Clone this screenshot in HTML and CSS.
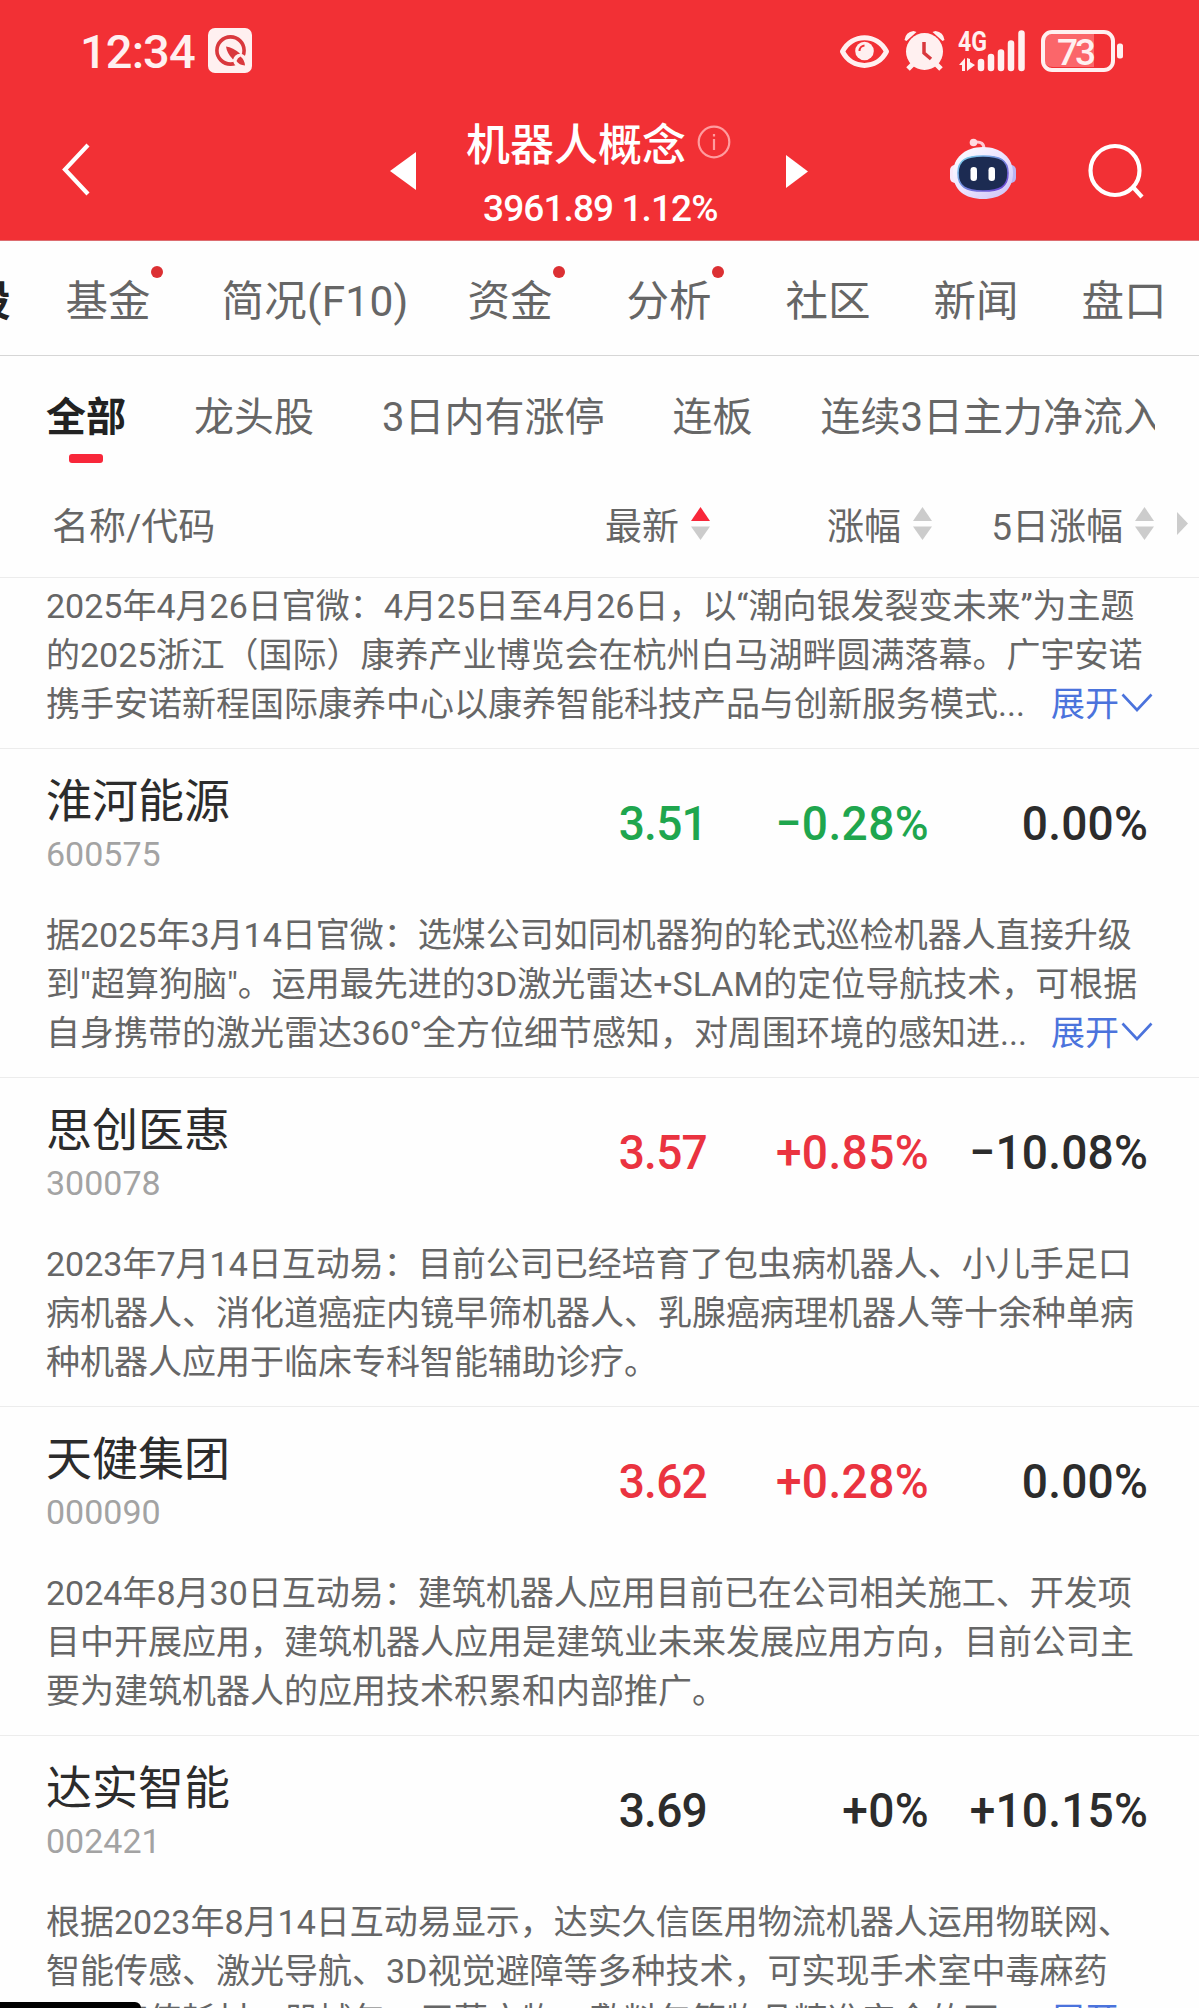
FILE: index.html
```html
<!DOCTYPE html>
<html lang="zh-CN">
<head>
<meta charset="utf-8">
<title>机器人概念</title>
<link rel="stylesheet" href="styles.css">
</head>
<body>
<div class="screen">
  <header class="top">
    <div class="status">
      <span class="clock">12:34</span>
      <svg class="app-icon" width="44" height="45" viewBox="0 0 44 45">
        <rect width="44" height="45" rx="7" fill="#fff0f0"/>
        <circle cx="22.5" cy="22.5" r="13.6" fill="none" stroke="#d9383d" stroke-width="3.6"/>
        <path d="M18 18.500q7 1 14 7l-7 6q-6-6-7-13z" fill="#d9383d"/>
        <circle cx="32" cy="32.500" r="6.800" fill="#fff0f0"/>
        <path d="M36 36l6-5v10l-6 2z" fill="#fff0f0"/>
        <path d="M32.500 28.500q4 3 4.500 9-6-.5-8.500-4.500 1-3.500 4-4.500z" fill="#d9383d"/>
      </svg>
      <span class="spacer"></span>
      <svg class="sys" width="290" height="50" viewBox="835 25 290 50">
        <path d="M842.500 51.500C852 33 877 33 886.500 51.500C877 70 852 70 842.500 51.500Z" fill="none" stroke="#fff0f0" stroke-width="5" stroke-linejoin="round"/>
        <circle cx="864.500" cy="51" r="9.300" fill="#fff0f0"/>
        <path d="M859.500 51a5.500 5.500 0 0 1 5-5.500" fill="none" stroke="#f23035" stroke-width="2"/>
        <circle cx="924.500" cy="51.500" r="18.500" fill="#fff0f0"/>
        <path d="M904.500 40q1-8 9-9l3 1-10 9zM944.500 40q-1-8-9-9l-3 1 10 9z" fill="#fff0f0"/>
        <path d="M913 64l-5 5M936 64l5 5" stroke="#fff0f0" stroke-width="5"/>
        <path d="M924 42v11l7 6" fill="none" stroke="#d9383d" stroke-width="3.500"/>
        <text class="net" x="958" y="50.500" textLength="29" lengthAdjust="spacingAndGlyphs">4G</text>
        <path d="M959 65l6-7v13h-3v-6zM967 58v13l8-6-5-3v-3z" fill="#fff0f0"/>
        <path d="M981 62v6M991 57v11M1001 52.500v15.500M1011 43.500v24.500M1021.500 33.500v34.500" stroke="#fff0f0" stroke-width="6.500" stroke-linecap="round"/>
        <path d="M1053 34h41v33h-41q-9 0-9-9v-15q0-9 9-9z" fill="#fb666a"/>
        <rect x="1043" y="32" width="70" height="38" rx="9" fill="none" stroke="#fff0f0" stroke-width="4"/>
        <rect x="1117" y="43.500" width="6" height="15" rx="2.500" fill="#fff0f0"/>
        <text class="battery" x="1057" y="65" textLength="39">73</text>
      </svg>
    </div>
    <div class="nav">
      <svg class="back" width="30" height="54" viewBox="0 0 30 54"><path d="M27 2L4 26.500 27 51" fill="none" stroke="#fff" stroke-width="4.200"/></svg>
      <svg class="prev" width="26" height="38" viewBox="0 0 26 38"><path d="M26 0v38L0 19z" fill="#fff"/></svg>
      <div class="heading">
        <div class="title"><span>机器人概念</span><svg class="info" width="34" height="34" viewBox="0 0 34 34" fill="none" stroke="#ff9c9f" stroke-width="2.200"><circle cx="17" cy="17" r="15.300"/><path d="M17 14v11M17 9v2.500"/></svg></div>
        <div class="quote">3961.89 1.12%</div>
      </div>
      <svg class="next" width="22" height="33" viewBox="0 0 22 33"><path d="M0 0v33l22-16.500z" fill="#fff"/></svg>
      <svg class="robot" width="68" height="62" viewBox="949 138 68 62">
        <defs>
          <linearGradient id="shell" x1="0" y1="0" x2="1" y2="1"><stop offset="0" stop-color="#fff"/><stop offset=".5" stop-color="#ece4ff"/><stop offset="1" stop-color="#c9c0f5"/></linearGradient>
          <linearGradient id="rim" x1="0" y1="0" x2="1" y2="1"><stop offset="0" stop-color="#7dd6ec"/><stop offset="1" stop-color="#6a3ad0"/></linearGradient>
        </defs>
        <path d="M975 142q9-1 9 7" fill="none" stroke="#ffc9d3" stroke-width="3"/>
        <circle cx="973.500" cy="142.500" r="3.800" fill="#ffdbe2"/>
        <rect x="950" y="165" width="10" height="18" rx="5" fill="#f7e9fa"/>
        <rect x="1006" y="165" width="10" height="18" rx="5" fill="#b9b4f2"/>
        <path d="M983 147C1001 147 1013 158 1013 173C1013 190 1001 199 983 199C965 199 953 190 953 173C953 158 965 147 983 147Z" fill="url(#shell)"/>
        <path d="M983 156C1000 156 1008 160 1008 173C1008 187 1000 191 983 191C966 191 958 187 958 173C958 160 966 156 983 156Z" fill="#1c2b52" stroke="url(#rim)" stroke-width="1.600"/>
        <rect x="970.500" y="167" width="6.500" height="14" rx="3.200" fill="#fff"/>
        <rect x="988.500" y="167" width="6.500" height="14" rx="3.200" fill="#fff"/>
      </svg>
      <svg class="search" width="56" height="56" viewBox="0 0 56 56" fill="none" stroke="#fff" stroke-width="4.200"><circle cx="27" cy="27.500" r="24.500"/><path d="M44 43l10 11"/></svg>
    </div>
  </header>

  <nav class="tabs">
    <span class="tab clipped">股</span>
    <span class="tab dot">基金</span>
    <span class="tab wide">简况(F10)</span>
    <span class="tab dot">资金</span>
    <span class="tab dot">分析</span>
    <span class="tab">社区</span>
    <span class="tab">新闻</span>
    <span class="tab">盘口</span>
  </nav>

  <div class="filters">
    <span class="filter active">全部</span>
    <span class="filter">龙头股</span>
    <span class="filter">3日内有涨停</span>
    <span class="filter">连板</span>
    <span class="filter">连续3日主力净流入</span>
  </div>

  <div class="columns">
    <span class="col-name">名称/代码</span>
    <span class="col col-a">最新<svg class="sort" width="19" height="33" viewBox="0 0 19 33"><path d="M9.500 0L19 14H0z" fill="#f8273a"/><path d="M9.500 33L19 19.500H0z" fill="#ccc"/></svg></span>
    <span class="col col-b">涨幅<svg class="sort" width="19" height="33" viewBox="0 0 19 33" fill="#ccc"><path d="M9.500 0L19 14H0z"/><path d="M9.500 33L19 19.500H0z"/></svg></span>
    <span class="col col-c">5日涨幅<svg class="sort" width="19" height="33" viewBox="0 0 19 33" fill="#ccc"><path d="M9.500 0L19 14H0z"/><path d="M9.500 33L19 19.500H0z"/></svg></span>
    <svg class="more" width="11" height="23" viewBox="0 0 11 23"><path d="M0 0v23l11-11.500z" fill="#ccc"/></svg>
  </div>

  <main class="list">
    <article class="stock partial">
      <div class="desc">
        <p>2025年4月26日官微：4月25日至4月26日，以“潮向银发裂变未来”为主题</p>
        <p>的2025浙江（国际）康养产业博览会在杭州白马湖畔圆满落幕。广宇安诺</p>
        <p class="last">携手安诺新程国际康养中心以康养智能科技产品与创新服务模式...<a class="expand">展开<svg width="32" height="20" viewBox="0 0 32 20"><path d="M1.500 1.500L16 17 30.500 1.500" fill="none" stroke="#4b73dc" stroke-width="2.600"/></svg></a></p>
      </div>
    </article>
    <article class="stock">
      <div class="row">
        <div class="id"><div class="name">淮河能源</div><div class="code">600575</div></div>
        <span class="num n1 down">3.51</span><span class="num n2 down">−0.28%</span><span class="num n3">0.00%</span>
      </div>
      <div class="desc">
        <p>据2025年3月14日官微：选煤公司如同机器狗的轮式巡检机器人直接升级</p>
        <p>到"超算狗脑"。运用最先进的3D激光雷达+SLAM的定位导航技术，可根据</p>
        <p class="last">自身携带的激光雷达360°全方位细节感知，对周围环境的感知进...<a class="expand">展开<svg width="32" height="20" viewBox="0 0 32 20"><path d="M1.500 1.500L16 17 30.500 1.500" fill="none" stroke="#4b73dc" stroke-width="2.600"/></svg></a></p>
      </div>
    </article>
    <article class="stock">
      <div class="row">
        <div class="id"><div class="name">思创医惠</div><div class="code">300078</div></div>
        <span class="num n1 up">3.57</span><span class="num n2 up">+0.85%</span><span class="num n3">−10.08%</span>
      </div>
      <div class="desc">
        <p>2023年7月14日互动易：目前公司已经培育了包虫病机器人、小儿手足口</p>
        <p>病机器人、消化道癌症内镜早筛机器人、乳腺癌病理机器人等十余种单病</p>
        <p>种机器人应用于临床专科智能辅助诊疗。</p>
      </div>
    </article>
    <article class="stock">
      <div class="row">
        <div class="id"><div class="name">天健集团</div><div class="code">000090</div></div>
        <span class="num n1 up">3.62</span><span class="num n2 up">+0.28%</span><span class="num n3">0.00%</span>
      </div>
      <div class="desc">
        <p>2024年8月30日互动易：建筑机器人应用目前已在公司相关施工、开发项</p>
        <p>目中开展应用，建筑机器人应用是建筑业未来发展应用方向，目前公司主</p>
        <p>要为建筑机器人的应用技术积累和内部推广。</p>
      </div>
    </article>
    <article class="stock">
      <div class="row">
        <div class="id"><div class="name">达实智能</div><div class="code">002421</div></div>
        <span class="num n1">3.69</span><span class="num n2">+0%</span><span class="num n3">+10.15%</span>
      </div>
      <div class="desc">
        <p>根据2023年8月14日互动易显示，达实久信医用物流机器人运用物联网、</p>
        <p>智能传感、激光导航、3D视觉避障等多种技术，可实现手术室中毒麻药</p>
        <p class="last">品、高值耗材、器械包、无菌衣物、敷料包等物品精准安全的可...<a class="expand">展开<svg width="32" height="20" viewBox="0 0 32 20"><path d="M1.500 1.500L16 17 30.500 1.500" fill="none" stroke="#4b73dc" stroke-width="2.600"/></svg></a></p>
      </div>
    </article>
  </main>
  <div class="corner"></div>
</div>
</body>
</html>
```
FILE: styles.css
```css
* { box-sizing: border-box; }

body {
  margin: 0;
  background: #fff;
  color: #666;
  font-family: Roboto, "Noto Sans CJK SC", sans-serif;
}

p { margin: 0; }
svg { display: block; flex: none; }

.screen {
  position: relative;
  width: 1199px;
  height: 2008px;
  overflow: hidden;
  display: flex;
  flex-direction: column;
  background: #fefefe;
}

.top {
  flex: none;
  height: 241px;
  background: #f23035;
  border-bottom: 1px solid #dd6d70;
  color: #fff;
}

.status {
  display: flex;
  align-items: center;
  height: 101px;
  padding: 0 74px 0 80px;
}
.clock {
  width: 128px;
  font-size: 47px;
  font-weight: 500;
  line-height: 56px;
  letter-spacing: -.900px;
  padding-top: 2px;
  color: #fff0f0;
}
.spacer { flex: 1; }
.sys { margin-top: -1px; }
.sys text { fill: #fff0f0; font-weight: 700; }
.sys .net { font-size: 28px; }
.sys .battery { font-size: 37px; font-weight: 500; }

.nav {
  display: flex;
  align-items: flex-start;
  height: 139px;
}
.back { margin: 42px 0 0 61px; }
.prev { margin: 51px 0 0 299px; }
.heading {
  width: 370px;
  padding-top: 14px;
}
.title {
  display: flex;
  align-items: center;
  gap: 11px;
  padding-left: 50px;
  font-size: 44px;
  font-weight: 500;
  line-height: 54px;
}
.title span { padding-top: 4px; margin-bottom: -4px; }
.quote {
  padding-left: 67px;
  margin-top: 18px;
  font-size: 37px;
  font-weight: 500;
  line-height: 44px;
  letter-spacing: -.900px;
}
.next { margin-top: 54px; }
.robot { margin: 37px 0 0 141px; }
.search { margin: 42px 0 0 71px; }

.tabs {
  flex: none;
  display: flex;
  align-items: center;
  gap: 63px;
  height: 115px;
  margin-left: -32px;
  border-bottom: 1px solid #d6d6d6;
  padding-top: 7px;
  font-size: 42.500px;
  line-height: 60px;
  white-space: nowrap;
}
.tab.clipped {
  color: #222;
  font-weight: 700;
  margin-right: -8px;
}
.tab.wide {
  letter-spacing: .2px;
  margin-left: -3px;
  margin-right: -4px;
}
.tab.dot {
  position: relative;
  margin-right: 11px;
}
.tab.dot::after {
  content: "";
  position: absolute;
  top: -6px;
  right: -12px;
  width: 12px;
  height: 12px;
  border-radius: 50%;
  background: #dc3033;
}

.filters {
  flex: none;
  display: flex;
  gap: 68px;
  height: 118px;
  width: 1155px;
  padding: 32px 0 0 46px;
  overflow: hidden;
  font-size: 40px;
  line-height: 60px;
  white-space: nowrap;
}
.filter { flex: none; }
.filter.active {
  display: flex;
  flex-direction: column;
  align-items: center;
  gap: 6px;
  font-weight: 700;
  color: #222;
}
.filter.active::after {
  content: "";
  width: 34px;
  height: 9px;
  border-radius: 3px;
  background: #f8273a;
}

.columns {
  flex: none;
  display: flex;
  align-items: center;
  height: 104px;
  border-bottom: 1px solid #ececec;
  padding-top: 4px;
  font-size: 37px;
  line-height: 50px;
}
.col-name { width: 405px; padding-left: 52px; }
.col {
  display: flex;
  align-items: center;
  justify-content: flex-end;
  gap: 12px;
}
.sort, .more { margin-bottom: 8px; }
.col-a { width: 305px; }
.col-b { width: 222px; }
.col-c { width: 222px; }
.more { margin-left: 23px; }

.stock {
  height: 329px;
  padding: 22px 46px 0;
  border-bottom: 1px solid #ececec;
}
.stock.partial { height: 171px; padding-top: 4px; }
.row { display: flex; height: 140px; }
.id { width: 360px; }
.name {
  font-size: 46px;
  line-height: 60px;
  color: #2c2c2c;
}
.code {
  font-size: 34px;
  line-height: 40px;
  margin-top: 3px;
  color: #a3a3a3;
}
.num {
  height: 83px;
  padding-top: 23px;
  font-size: 49px;
  line-height: 60px;
  text-align: right;
  white-space: nowrap;
  font-weight: 500;
  color: #2c2c2c;
  transform: scaleX(.94);
  transform-origin: right;
}
.n1 { width: 301px; letter-spacing: -.800px; }
.n2 { width: 222px; letter-spacing: .400px; }
.n3 { width: 219px; letter-spacing: .200px; }
.num.up { color: #ea3340; }
.num.down { color: #1fa64e; }

.desc {
  font-size: 34px;
  line-height: 49px;
  white-space: nowrap;
}
.desc .last {
  display: flex;
  justify-content: space-between;
}
.expand {
  display: flex;
  align-items: center;
  gap: 2px;
  color: #4b73dc;
}
.expand svg { margin-bottom: 3px; }

/* Rounded handle peeking in from the bottom edge */
.corner {
  position: absolute;
  left: 0;
  bottom: 0;
  width: 141px;
  height: 6px;
  border-top-right-radius: 6px;
  background: #000;
}
```
